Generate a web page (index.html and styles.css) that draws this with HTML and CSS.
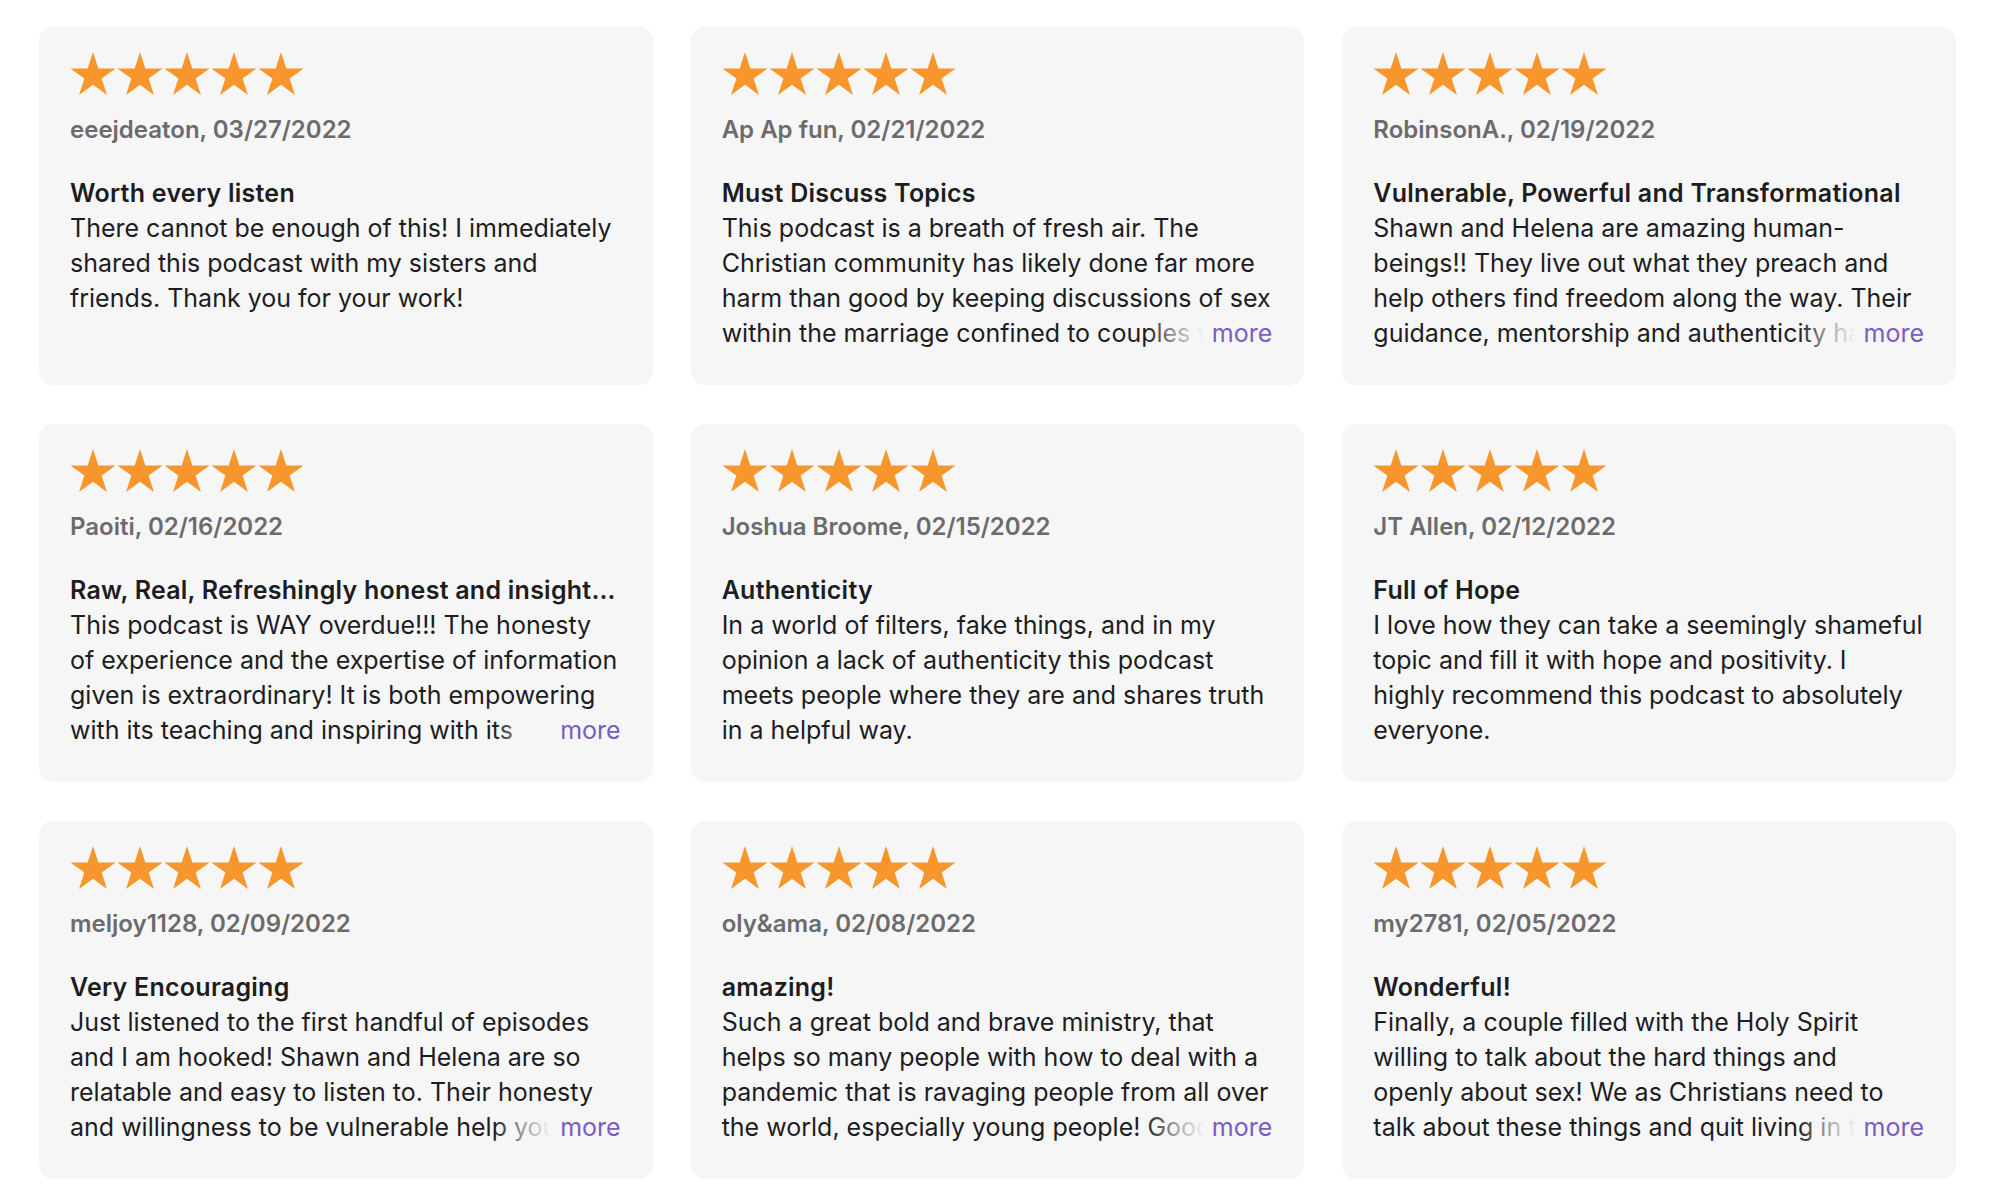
FILE: index.html
```html
<!DOCTYPE html>
<html lang="en">
<head>
<meta charset="utf-8">
<title>Ratings and Reviews</title>
<link rel="stylesheet" href="styles.css">
</head>
<body>
<svg width="0" height="0" class="defs" aria-hidden="true">
  <defs>
    <symbol id="star" viewBox="0 0 46 43">
      <polygon points="23,0 28.34,16.42 45.61,16.42 31.64,26.58 36.97,43 23,32.85 9.03,43 14.36,26.58 0.39,16.42 17.66,16.42"/>
    </symbol>
  </defs>
</svg>
<main class="reviews">
  <article class="card">
    <div class="stars"><svg class="star"><use href="#star"/></svg><svg class="star"><use href="#star"/></svg><svg class="star"><use href="#star"/></svg><svg class="star"><use href="#star"/></svg><svg class="star"><use href="#star"/></svg></div>
    <div class="author">eeejdeaton, 03/27/2022</div>
    <h3 class="title">Worth every listen</h3>
    <div class="body">
      <div class="line">There cannot be enough of this! I immediately</div>
      <div class="line">shared this podcast with my sisters and</div>
      <div class="line">friends. Thank you for your work!</div>
    </div>
  </article>
  <article class="card">
    <div class="stars"><svg class="star"><use href="#star"/></svg><svg class="star"><use href="#star"/></svg><svg class="star"><use href="#star"/></svg><svg class="star"><use href="#star"/></svg><svg class="star"><use href="#star"/></svg></div>
    <div class="author">Ap Ap fun, 02/21/2022</div>
    <h3 class="title">Must Discuss Topics</h3>
    <div class="body">
      <div class="line">This podcast is a breath of fresh air. The</div>
      <div class="line">Christian community has likely done far more</div>
      <div class="line">harm than good by keeping discussions of sex</div>
      <div class="line">within the marriage confined to couples who are married</div>
      <span class="more">more</span>
    </div>
  </article>
  <article class="card">
    <div class="stars"><svg class="star"><use href="#star"/></svg><svg class="star"><use href="#star"/></svg><svg class="star"><use href="#star"/></svg><svg class="star"><use href="#star"/></svg><svg class="star"><use href="#star"/></svg></div>
    <div class="author">RobinsonA., 02/19/2022</div>
    <h3 class="title">Vulnerable, Powerful and Transformational</h3>
    <div class="body">
      <div class="line">Shawn and Helena are amazing human-</div>
      <div class="line">beings!! They live out what they preach and</div>
      <div class="line">help others find freedom along the way. Their</div>
      <div class="line">guidance, mentorship and authenticity have helped</div>
      <span class="more">more</span>
    </div>
  </article>
  <article class="card">
    <div class="stars"><svg class="star"><use href="#star"/></svg><svg class="star"><use href="#star"/></svg><svg class="star"><use href="#star"/></svg><svg class="star"><use href="#star"/></svg><svg class="star"><use href="#star"/></svg></div>
    <div class="author">Paoiti, 02/16/2022</div>
    <h3 class="title">Raw, Real, Refreshingly honest and insight…</h3>
    <div class="body">
      <div class="line">This podcast is WAY overdue!!! The honesty</div>
      <div class="line">of experience and the expertise of information</div>
      <div class="line">given is extraordinary! It is both empowering</div>
      <div class="line">with its teaching and inspiring with its</div>
      <span class="more">more</span>
    </div>
  </article>
  <article class="card">
    <div class="stars"><svg class="star"><use href="#star"/></svg><svg class="star"><use href="#star"/></svg><svg class="star"><use href="#star"/></svg><svg class="star"><use href="#star"/></svg><svg class="star"><use href="#star"/></svg></div>
    <div class="author">Joshua Broome, 02/15/2022</div>
    <h3 class="title">Authenticity</h3>
    <div class="body">
      <div class="line">In a world of filters, fake things, and in my</div>
      <div class="line">opinion a lack of authenticity this podcast</div>
      <div class="line">meets people where they are and shares truth</div>
      <div class="line">in a helpful way.</div>
    </div>
  </article>
  <article class="card">
    <div class="stars"><svg class="star"><use href="#star"/></svg><svg class="star"><use href="#star"/></svg><svg class="star"><use href="#star"/></svg><svg class="star"><use href="#star"/></svg><svg class="star"><use href="#star"/></svg></div>
    <div class="author">JT Allen, 02/12/2022</div>
    <h3 class="title">Full of Hope</h3>
    <div class="body">
      <div class="line">I love how they can take a seemingly shameful</div>
      <div class="line">topic and fill it with hope and positivity. I</div>
      <div class="line">highly recommend this podcast to absolutely</div>
      <div class="line">everyone.</div>
    </div>
  </article>
  <article class="card">
    <div class="stars"><svg class="star"><use href="#star"/></svg><svg class="star"><use href="#star"/></svg><svg class="star"><use href="#star"/></svg><svg class="star"><use href="#star"/></svg><svg class="star"><use href="#star"/></svg></div>
    <div class="author">meljoy1128, 02/09/2022</div>
    <h3 class="title">Very Encouraging</h3>
    <div class="body">
      <div class="line">Just listened to the first handful of episodes</div>
      <div class="line">and I am hooked! Shawn and Helena are so</div>
      <div class="line">relatable and easy to listen to. Their honesty</div>
      <div class="line">and willingness to be vulnerable help you feel</div>
      <span class="more">more</span>
    </div>
  </article>
  <article class="card">
    <div class="stars"><svg class="star"><use href="#star"/></svg><svg class="star"><use href="#star"/></svg><svg class="star"><use href="#star"/></svg><svg class="star"><use href="#star"/></svg><svg class="star"><use href="#star"/></svg></div>
    <div class="author">oly&amp;ama, 02/08/2022</div>
    <h3 class="title">amazing!</h3>
    <div class="body">
      <div class="line">Such a great bold and brave ministry, that</div>
      <div class="line">helps so many people with how to deal with a</div>
      <div class="line">pandemic that is ravaging people from all over</div>
      <div class="line">the world, especially young people! Good job</div>
      <span class="more">more</span>
    </div>
  </article>
  <article class="card">
    <div class="stars"><svg class="star"><use href="#star"/></svg><svg class="star"><use href="#star"/></svg><svg class="star"><use href="#star"/></svg><svg class="star"><use href="#star"/></svg><svg class="star"><use href="#star"/></svg></div>
    <div class="author">my2781, 02/05/2022</div>
    <h3 class="title">Wonderful!</h3>
    <div class="body">
      <div class="line">Finally, a couple filled with the Holy Spirit</div>
      <div class="line">willing to talk about the hard things and</div>
      <div class="line">openly about sex! We as Christians need to</div>
      <div class="line">talk about these things and quit living in the</div>
      <span class="more">more</span>
    </div>
  </article>
</main>
</body>
</html>
```
FILE: styles.css
```css
* { box-sizing: border-box; }

html, body {
  margin: 0;
  background: #ffffff;
}

body {
  font-family: Inter, "Noto Sans", "Liberation Sans", sans-serif;
  color: #1d1d1f;
  -webkit-font-smoothing: antialiased;
}

.defs {
  position: absolute;
  width: 0;
  height: 0;
  overflow: hidden;
}

.reviews {
  display: grid;
  grid-template-columns: repeat(3, 1fr);
  column-gap: 38px;
  row-gap: 39px;
  padding: 27px 33px 0 39px;
}

.card {
  background: #f6f6f6;
  border-radius: 14px;
  height: 358px;
  padding: 25px 32px 0 31px;
  min-width: 0;
}

.stars {
  display: flex;
  gap: 1px;
  height: 43px;
}

.star {
  width: 46px;
  height: 43px;
  fill: #f7962c;
  flex: none;
}

.author {
  margin-top: 17px;
  font-size: 24px;
  line-height: 35px;
  font-weight: 600;
  color: #6b6b6e;
}

.title {
  margin: 29px 0 0;
  font-size: 25px;
  line-height: 35px;
  font-weight: 600;
  letter-spacing: 0.25px;
  color: #1d1d1f;
  white-space: nowrap;
  overflow: hidden;
}

.body {
  position: relative;
  font-size: 25px;
  line-height: 35px;
  color: #1d1d1f;
}

.line {
  white-space: nowrap;
  overflow: hidden;
}

.more {
  position: absolute;
  right: 0;
  bottom: 0;
  padding-left: 66px;
  background: linear-gradient(to right, rgba(246, 246, 246, 0) 0, rgba(246, 246, 246, 0.6) 30px, #f6f6f6 58px);
  color: #7b5cc3;
}
```
